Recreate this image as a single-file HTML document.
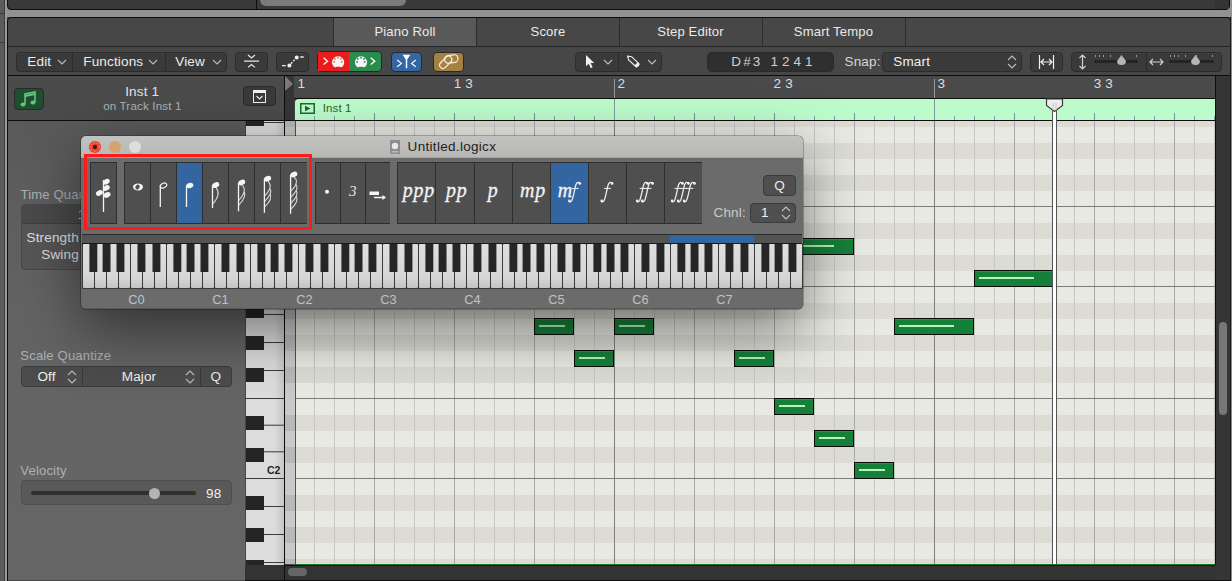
<!DOCTYPE html>
<html><head><meta charset="utf-8"><style>
html,body{margin:0;padding:0;}
body{width:1232px;height:581px;overflow:hidden;position:relative;background:#474747;font-family:"Liberation Sans",sans-serif;}
div{position:absolute;box-sizing:border-box;}
svg{position:absolute;overflow:visible;}
</style></head><body>
<div style="left:0px;top:0px;width:5px;height:581px;background:#5b5b5b"></div>
<div style="left:0px;top:13px;width:5px;height:1px;background:#3a3a3a"></div>
<div style="left:0px;top:42px;width:5px;height:1px;background:#3a3a3a"></div>
<div style="left:4px;top:0px;width:1px;height:581px;background:#3c3c3c"></div>
<div style="left:5px;top:0px;width:2px;height:581px;background:#9a9a9a"></div>
<div style="left:7px;top:0px;width:1225px;height:17px;background:#929292"></div>
<div style="left:7px;top:-6px;width:1223px;height:16px;background:#393939;border:1px solid #0d0d0d;border-radius:0 0 4px 4px"></div>
<div style="left:256px;top:0px;width:1px;height:9px;background:#0d0d0d"></div>
<div style="left:260px;top:-6px;width:146px;height:12px;background:#7b7b7b;border-radius:6px"></div>
<div style="left:1215px;top:0px;width:14px;height:9px;background:#333"></div>
<div style="left:7px;top:17px;width:1224px;height:570px;background:#474747;border:1px solid #0d0d0d;border-radius:4px 4px 0 0"></div>
<div style="left:333px;top:18px;width:143px;height:28px;background:#595959"></div>
<div style="left:333px;top:18px;width:1px;height:28px;background:#2b2b2b"></div>
<div style="left:476px;top:18px;width:1px;height:28px;background:#2b2b2b"></div>
<div style="left:619px;top:18px;width:1px;height:28px;background:#2b2b2b"></div>
<div style="left:762px;top:18px;width:1px;height:28px;background:#2b2b2b"></div>
<div style="left:905px;top:18px;width:1px;height:28px;background:#2b2b2b"></div>
<div style="left:8px;top:46px;width:1222px;height:1px;background:#262626"></div>
<div style="left:335.00px;top:24.91px;width:140px;text-align:center;font:normal normal 13.104px/13.104px 'Liberation Sans', sans-serif;color:#eaeaea;white-space:pre;letter-spacing:0.15px;">Piano Roll</div>
<div style="left:478.00px;top:24.91px;width:140px;text-align:center;font:normal normal 13.104px/13.104px 'Liberation Sans', sans-serif;color:#eaeaea;white-space:pre;letter-spacing:0.15px;">Score</div>
<div style="left:620.50px;top:24.91px;width:140px;text-align:center;font:normal normal 13.104px/13.104px 'Liberation Sans', sans-serif;color:#eaeaea;white-space:pre;letter-spacing:0.15px;">Step Editor</div>
<div style="left:763.50px;top:24.91px;width:140px;text-align:center;font:normal normal 13.104px/13.104px 'Liberation Sans', sans-serif;color:#eaeaea;white-space:pre;letter-spacing:0.15px;">Smart Tempo</div>
<div style="left:8px;top:75px;width:1222px;height:1px;background:#0d0d0d"></div>
<div style="left:16px;top:52px;width:211px;height:20px;background:#3a3a3a;border:1px solid #2c2c2c;border-radius:4px;box-shadow:inset 0 1px 0 rgba(255,255,255,0.03)"></div>
<div style="left:72px;top:53px;width:1px;height:18px;background:#2c2c2c"></div>
<div style="left:165px;top:53px;width:1px;height:18px;background:#2c2c2c"></div>
<div style="left:27.3px;top:54.56px;font:normal normal 13.52px/13.52px 'Liberation Sans', sans-serif;color:#ececec;white-space:pre;letter-spacing:0.15px;">Edit</div>
<svg style="position:absolute;left:56.5px;top:59px;" width="10" height="6" viewBox="0 0 10 6"><path d="M1 1 L5 5 L9 1" fill="none" stroke="#bdbdbd" stroke-width="1.1"/></svg>
<div style="left:83.3px;top:54.56px;font:normal normal 13.52px/13.52px 'Liberation Sans', sans-serif;color:#ececec;white-space:pre;letter-spacing:0.15px;">Functions</div>
<svg style="position:absolute;left:148px;top:59px;" width="10" height="6" viewBox="0 0 10 6"><path d="M1 1 L5 5 L9 1" fill="none" stroke="#bdbdbd" stroke-width="1.1"/></svg>
<div style="left:175.3px;top:54.56px;font:normal normal 13.52px/13.52px 'Liberation Sans', sans-serif;color:#ececec;white-space:pre;letter-spacing:0.15px;">View</div>
<svg style="position:absolute;left:211.5px;top:59px;" width="10" height="6" viewBox="0 0 10 6"><path d="M1 1 L5 5 L9 1" fill="none" stroke="#bdbdbd" stroke-width="1.1"/></svg>
<div style="left:235px;top:52px;width:33px;height:20px;background:#3a3a3a;border:1px solid #2c2c2c;border-radius:4px;box-shadow:inset 0 1px 0 rgba(255,255,255,0.03)"></div>
<svg style="position:absolute;left:235px;top:52px;" width="33" height="20" viewBox="0 0 33 20"><path d="M13 3 L16.5 6 L20 3 M9 9.2 H24 M13 15.4 L16.5 12.5 L20 15.4" fill="none" stroke="#e6e6e6" stroke-width="1.2"/></svg>
<div style="left:276px;top:52px;width:33px;height:20px;background:#3a3a3a;border:1px solid #2c2c2c;border-radius:4px;box-shadow:inset 0 1px 0 rgba(255,255,255,0.03)"></div>
<svg style="position:absolute;left:276px;top:52px;" width="33" height="20" viewBox="0 0 33 20"><path d="M6 13.6 H9.8 M24.3 5 H27.7" fill="none" stroke="#e8e8e8" stroke-width="1.3"/><path d="M15 11.8 L19 7.2" fill="none" stroke="#e8e8e8" stroke-width="1.3" stroke-dasharray="2 1.4"/><circle cx="13.4" cy="13.4" r="2" fill="#f0f0f0"/><circle cx="20.7" cy="5.5" r="2" fill="#f0f0f0"/></svg>
<div style="left:317px;top:51px;width:65px;height:21px;background:#2a8c4c;border:1px solid #262626;border-radius:4px;overflow:hidden"></div>
<div style="left:318px;top:52px;width:31px;height:19px;background:#ec1c1c"></div>
<svg style="position:absolute;left:318px;top:52px;" width="63" height="20" viewBox="0 0 63 20"><path d="M5.5 5.7 L9.6 9.3 L5.5 12.6" fill="none" stroke="#fff" stroke-width="1.3"/><path d="M17.1 15.6 A6.1 6.1 0 1 1 23.1 15.6 L21.900000000000002 14.8 H18.3 Z" fill="#f6f6f6"/><rect x="15.35" y="9.05" width="1.7" height="1.7" fill="#c98a5a"/><rect x="16.15" y="5.95" width="1.7" height="1.7" fill="#c98a5a"/><rect x="19.25" y="4.85" width="1.7" height="1.7" fill="#c98a5a"/><rect x="22.25" y="5.95" width="1.7" height="1.7" fill="#c98a5a"/><rect x="22.85" y="9.05" width="1.7" height="1.7" fill="#c98a5a"/><path d="M40 15.6 A6.1 6.1 0 1 1 46 15.6 L44.8 14.8 H41.2 Z" fill="#f6f6f6"/><rect x="38.25" y="9.05" width="1.7" height="1.7" fill="#3d8a7a"/><rect x="39.05" y="5.95" width="1.7" height="1.7" fill="#3d8a7a"/><rect x="42.15" y="4.85" width="1.7" height="1.7" fill="#3d8a7a"/><rect x="45.15" y="5.95" width="1.7" height="1.7" fill="#3d8a7a"/><rect x="45.75" y="9.05" width="1.7" height="1.7" fill="#3d8a7a"/><path d="M52.7 5.7 L56.8 9.3 L52.7 12.6" fill="none" stroke="#fff" stroke-width="1.3"/></svg>
<div style="left:391px;top:52px;width:31px;height:20px;background:#3367a3;border:1px solid #2a2a2a;border-radius:4px"></div>
<svg style="position:absolute;left:391px;top:52px;" width="31" height="20" viewBox="0 0 31 20"><path d="M6.2 8 L10.4 11.4 L6.2 14.8 M24.8 8 L20.6 11.4 L24.8 14.8" fill="none" stroke="#fff" stroke-width="1.2"/><path d="M11.6 2.8 H19.4 L16.3 7.2 H14.7 Z" fill="#fff"/><path d="M15.5 6 V16.2" stroke="#fff" stroke-width="1.5"/></svg>
<div style="left:433px;top:52px;width:31px;height:20px;background:#a5813f;border:1px solid #2a2a2a;border-radius:4px"></div>
<svg style="position:absolute;left:433px;top:52px;" width="31" height="20" viewBox="0 0 31 20"><g fill="none" stroke="#f6f1e6" stroke-width="1.2"><rect x="11.6" y="3.2" width="13.4" height="7.6" rx="3.8" transform="rotate(-8 18.3 7)"/><rect x="5.5" y="7" width="14.5" height="6.6" rx="3.3" transform="rotate(-45 12.7 10.3)"/></g></svg>
<div style="left:575px;top:52px;width:87px;height:20px;background:#3a3a3a;border:1px solid #2c2c2c;border-radius:4px;box-shadow:inset 0 1px 0 rgba(255,255,255,0.03)"></div>
<div style="left:618px;top:53px;width:1px;height:18px;background:#2c2c2c"></div>
<svg style="position:absolute;left:580px;top:50px;" width="20" height="22" viewBox="0 0 20 22"><path d="M6 5 V16.2 L8.7 13.7 L10.8 18.2 L12.6 17.3 L10.6 13 H14.2 Z" fill="#f2f2f2"/></svg>
<svg style="position:absolute;left:602.5px;top:59px;" width="10" height="6" viewBox="0 0 10 6"><path d="M1 1 L5 5 L9 1" fill="none" stroke="#bdbdbd" stroke-width="1.1"/></svg>
<svg style="position:absolute;left:620px;top:50px;" width="30" height="24" viewBox="0 0 30 24"><g transform="translate(7.4 5.8) rotate(43) scale(0.86)"><path d="M0.3 0 L4.2 -2.5 H15.6 Q17 -2.5 17 -1.1 V1.1 Q17 2.5 15.6 2.5 H4.2 Z" fill="none" stroke="#f2f2f2" stroke-width="1.3" stroke-linejoin="round"/><rect x="13.8" y="-2.5" width="3.2" height="5" rx="1" fill="#f2f2f2"/><path d="M0.3 0 L2.2 -1.2 V1.2 Z" fill="#f2f2f2"/></g></svg>
<svg style="position:absolute;left:646.5px;top:59px;" width="10" height="6" viewBox="0 0 10 6"><path d="M1 1 L5 5 L9 1" fill="none" stroke="#bdbdbd" stroke-width="1.1"/></svg>
<div style="left:707px;top:52px;width:127px;height:20px;background:#2f2f2f;border:1px solid #2a2a2a;border-radius:5px"></div>
<div style="left:731.2px;top:55.06px;font:normal normal 13.52px/13.52px 'Liberation Sans', sans-serif;color:#cfcfcf;white-space:pre;letter-spacing:0.15px;letter-spacing:2.2px">D#3</div>
<div style="left:770.6px;top:55.06px;font:normal normal 13.52px/13.52px 'Liberation Sans', sans-serif;color:#cfcfcf;white-space:pre;letter-spacing:0.15px;letter-spacing:0.1px">1 2 4 1</div>
<div style="left:844.5px;top:54.56px;font:normal normal 13.52px/13.52px 'Liberation Sans', sans-serif;color:#d8d8d8;white-space:pre;letter-spacing:0.15px;">Snap:</div>
<div style="left:882px;top:52px;width:140px;height:20px;background:#3a3a3a;border:1px solid #2c2c2c;border-radius:4px;box-shadow:inset 0 1px 0 rgba(255,255,255,0.03)"></div>
<div style="left:893.3px;top:54.56px;font:normal normal 13.52px/13.52px 'Liberation Sans', sans-serif;color:#f0f0f0;white-space:pre;letter-spacing:0.15px;">Smart</div>
<svg style="position:absolute;left:1006.5px;top:55px;" width="10" height="14" viewBox="0 0 10 14"><path d="M1 5 L5 1 L9 5 M1 9 L5 13 L9 9" fill="none" stroke="#bdbdbd" stroke-width="1.1"/></svg>
<div style="left:1030px;top:52px;width:33px;height:20px;background:#3a3a3a;border:1px solid #2c2c2c;border-radius:4px;box-shadow:inset 0 1px 0 rgba(255,255,255,0.03)"></div>
<svg style="position:absolute;left:1038px;top:54px;" width="17" height="16" viewBox="0 0 17 16"><path d="M1.5 1 V15 M15.5 1 V15 M3 8 H14 M6 5 L3 8 L6 11 M11 5 L14 8 L11 11" fill="none" stroke="#f0f0f0" stroke-width="1.2"/></svg>
<div style="left:1071px;top:52px;width:151px;height:20px;background:#3a3a3a;border:1px solid #2c2c2c;border-radius:4px;box-shadow:inset 0 1px 0 rgba(255,255,255,0.03)"></div>
<div style="left:1146px;top:53px;width:1px;height:18px;background:#2c2c2c"></div>
<svg style="position:absolute;left:1077px;top:53px;" width="11" height="18" viewBox="0 0 11 18"><path d="M5.5 2 V16 M2.5 5 L5.5 2 L8.5 5 M2.5 13 L5.5 16 L8.5 13" fill="none" stroke="#d0d0d0" stroke-width="1.2"/></svg>
<div style="left:1094px;top:60px;width:44px;height:3px;background:#242424;border-radius:2px"></div>
<svg style="position:absolute;left:1116px;top:54px;" width="11" height="12" viewBox="0 0 11 12"><path d="M5.5 1 L10 7 Q10 11 5.5 11 Q1 11 1 7 Z" fill="#b5b5b5"/></svg>
<div style="left:1095px;top:55px;width:1px;height:2px;background:#9a9a9a"></div>
<div style="left:1099px;top:55px;width:1px;height:2px;background:#9a9a9a"></div>
<div style="left:1103px;top:55px;width:1px;height:2px;background:#9a9a9a"></div>
<div style="left:1110px;top:55px;width:1px;height:2px;background:#9a9a9a"></div>
<div style="left:1121px;top:55px;width:1px;height:2px;background:#9a9a9a"></div>
<div style="left:1136px;top:55px;width:1px;height:2px;background:#9a9a9a"></div>
<svg style="position:absolute;left:1149px;top:55px;" width="15" height="14" viewBox="0 0 15 14"><path d="M1 7 H14 M4 4 L1 7 L4 10 M11 4 L14 7 L11 10" fill="none" stroke="#d0d0d0" stroke-width="1.2"/></svg>
<div style="left:1169px;top:60px;width:45px;height:3px;background:#242424;border-radius:2px"></div>
<svg style="position:absolute;left:1190px;top:54px;" width="11" height="12" viewBox="0 0 11 12"><path d="M5.5 1 L10 7 Q10 11 5.5 11 Q1 11 1 7 Z" fill="#b5b5b5"/></svg>
<div style="left:1170px;top:55px;width:1px;height:2px;background:#9a9a9a"></div>
<div style="left:1174px;top:55px;width:1px;height:2px;background:#9a9a9a"></div>
<div style="left:1178px;top:55px;width:1px;height:2px;background:#9a9a9a"></div>
<div style="left:1185px;top:55px;width:1px;height:2px;background:#9a9a9a"></div>
<div style="left:1196px;top:55px;width:1px;height:2px;background:#9a9a9a"></div>
<div style="left:1212px;top:55px;width:1px;height:2px;background:#9a9a9a"></div>
<div style="left:8px;top:76px;width:276px;height:44px;background:#4b4b4b"></div>
<div style="left:8px;top:120px;width:1208px;height:1px;background:#0d0d0d"></div>
<div style="left:14px;top:88px;width:30px;height:22px;background:#1f4f2f;border:1px solid #2a2a2a;border-radius:4px"></div>
<svg style="position:absolute;left:14px;top:88px;" width="30" height="22" viewBox="0 0 30 22"><g fill="none" stroke="#62c47e" stroke-width="1.6"><path d="M11 16 V6 L21 4 V14"/><path d="M11 8 L21 6" stroke-width="2.2"/></g><ellipse cx="9" cy="16.5" rx="2.5" ry="2" fill="#62c47e"/><ellipse cx="19" cy="14.5" rx="2.5" ry="2" fill="#62c47e"/></svg>
<div style="left:82.20px;top:84.86px;width:120px;text-align:center;font:normal normal 13.52px/13.52px 'Liberation Sans', sans-serif;color:#e4e4e4;white-space:pre;letter-spacing:0.15px;">Inst 1</div>
<div style="left:82.40px;top:100.04px;width:120px;text-align:center;font:normal normal 11.648px/11.648px 'Liberation Sans', sans-serif;color:#a9b4b2;white-space:pre;letter-spacing:0.15px;">on Track Inst 1</div>
<div style="left:243px;top:86px;width:33px;height:20px;background:#3a3a3a;border:1px solid #2c2c2c;border-radius:4px"></div>
<div style="left:253px;top:90px;width:13px;height:13px;background:#3a3a3a;border:1.5px solid #f0f0f0;border-top-width:3px"></div>
<svg style="position:absolute;left:255px;top:94px;" width="9" height="7" viewBox="0 0 9 7"><path d="M1.5 2 L4.5 5 L7.5 2" fill="none" stroke="#f0f0f0" stroke-width="1.1"/></svg>
<div style="left:8px;top:121px;width:237px;height:459px;background:linear-gradient(#5a5a5a,#636363 40%,#666 100%)"></div>
<div style="left:20.5px;top:187.91px;font:normal normal 13.104px/13.104px 'Liberation Sans', sans-serif;color:#aab2b2;white-space:pre;letter-spacing:0.15px;">Time Quantize</div>
<div style="left:21px;top:204px;width:211px;height:66px;background:#565656;border:1px solid #474747;border-radius:4px"></div>
<div style="left:22px;top:205px;width:209px;height:19px;background:#4a4a4a;border-bottom:1px solid #3e3e3e;border-radius:3px 3px 0 0"></div>
<div style="left:78px;top:207.56px;font:normal normal 13.52px/13.52px 'Liberation Sans', sans-serif;color:#e6e6e6;white-space:pre;letter-spacing:0.15px;">1/16 Note</div>
<div style="left:-1.20px;top:230.76px;width:80px;text-align:right;font:normal normal 13.52px/13.52px 'Liberation Sans', sans-serif;color:#e0e0e0;white-space:pre;letter-spacing:0.15px;">Strength</div>
<div style="left:-1.20px;top:247.96px;width:80px;text-align:right;font:normal normal 13.52px/13.52px 'Liberation Sans', sans-serif;color:#e0e0e0;white-space:pre;letter-spacing:0.15px;">Swing</div>
<div style="left:20.3px;top:349.21px;font:normal normal 13.104px/13.104px 'Liberation Sans', sans-serif;color:#aab2b2;white-space:pre;letter-spacing:0.15px;">Scale Quantize</div>
<div style="left:21px;top:366px;width:211px;height:21px;background:#4c4c4c;border:1px solid #3c3c3c;border-radius:4px"></div>
<div style="left:82px;top:367px;width:1px;height:19px;background:#3a3a3a"></div>
<div style="left:200px;top:367px;width:1px;height:19px;background:#3a3a3a"></div>
<div style="left:16.50px;top:369.56px;width:60px;text-align:center;font:normal normal 13.52px/13.52px 'Liberation Sans', sans-serif;color:#f0f0f0;white-space:pre;letter-spacing:0.15px;">Off</div>
<svg style="position:absolute;left:66.6px;top:369.5px;" width="10" height="14" viewBox="0 0 10 14"><path d="M1 5 L5 1 L9 5 M1 9 L5 13 L9 9" fill="none" stroke="#bdbdbd" stroke-width="1.1"/></svg>
<div style="left:99.00px;top:369.56px;width:80px;text-align:center;font:normal normal 13.52px/13.52px 'Liberation Sans', sans-serif;color:#f0f0f0;white-space:pre;letter-spacing:0.15px;">Major</div>
<svg style="position:absolute;left:184.7px;top:369.5px;" width="10" height="14" viewBox="0 0 10 14"><path d="M1 5 L5 1 L9 5 M1 9 L5 13 L9 9" fill="none" stroke="#bdbdbd" stroke-width="1.1"/></svg>
<div style="left:200.80px;top:369.56px;width:30px;text-align:center;font:normal normal 13.52px/13.52px 'Liberation Sans', sans-serif;color:#f0f0f0;white-space:pre;letter-spacing:0.15px;">Q</div>
<div style="left:20.3px;top:464.21px;font:normal normal 13.104px/13.104px 'Liberation Sans', sans-serif;color:#aab2b2;white-space:pre;letter-spacing:0.15px;">Velocity</div>
<div style="left:21px;top:480px;width:211px;height:25px;background:#595959;border:1px solid #4e4e4e;border-radius:4px"></div>
<div style="left:31px;top:491px;width:165px;height:4px;background:#303030;border-radius:2px"></div>
<div style="left:148.5px;top:487.5px;width:11px;height:11px;background:#b4b4b4;border-radius:50%"></div>
<div style="left:206px;top:486.86px;font:normal normal 13.52px/13.52px 'Liberation Sans', sans-serif;color:#f2f2f2;white-space:pre;letter-spacing:0.15px;">98</div>
<div style="left:285px;top:76px;width:9px;height:44px;background:#363636"></div>
<svg style="position:absolute;left:285px;top:76px;" width="9" height="16" viewBox="0 0 9 16"><path d="M0 0 L8 8 L0 15 Z" fill="#7a7a7a"/></svg>
<div style="left:284px;top:76px;width:1px;height:505px;background:#0d0d0d"></div>
<div style="left:294px;top:76px;width:921px;height:22px;background:#4a4a4a"></div>
<div style="left:294px;top:98px;width:921px;height:1px;background:#0d0d0d"></div>
<div style="left:614px;top:79px;width:1px;height:19px;background:#9a9a9a"></div>
<div style="left:934px;top:79px;width:1px;height:19px;background:#9a9a9a"></div>
<div style="left:297.5px;top:76.76px;font:normal normal 13.52px/13.52px 'Liberation Sans', sans-serif;color:#dcdcdc;white-space:pre;letter-spacing:0.15px;">1</div>
<div style="left:453.8px;top:76.76px;font:normal normal 13.52px/13.52px 'Liberation Sans', sans-serif;color:#dcdcdc;white-space:pre;letter-spacing:0.15px;">1 3</div>
<div style="left:617.6px;top:76.76px;font:normal normal 13.52px/13.52px 'Liberation Sans', sans-serif;color:#dcdcdc;white-space:pre;letter-spacing:0.15px;">2</div>
<div style="left:773.6px;top:76.76px;font:normal normal 13.52px/13.52px 'Liberation Sans', sans-serif;color:#dcdcdc;white-space:pre;letter-spacing:0.15px;">2 3</div>
<div style="left:937.6px;top:76.76px;font:normal normal 13.52px/13.52px 'Liberation Sans', sans-serif;color:#dcdcdc;white-space:pre;letter-spacing:0.15px;">3</div>
<div style="left:1093.8px;top:76.76px;font:normal normal 13.52px/13.52px 'Liberation Sans', sans-serif;color:#dcdcdc;white-space:pre;letter-spacing:0.15px;">3 3</div>
<div style="left:295px;top:99px;width:920px;height:21px;background:#bdfcca;border-radius:4px 0 0 0"></div>
<svg style="position:absolute;left:300px;top:103px;" width="15" height="11" viewBox="0 0 15 11"><rect x="0.75" y="0.75" width="13.5" height="9.5" fill="none" stroke="#196a33" stroke-width="1.5"/><path d="M5 2.8 L10.5 5.5 L5 8.2 Z" fill="#196a33"/></svg>
<div style="left:322.7px;top:102.52px;font:normal normal 11.440000000000001px/11.440000000000001px 'Liberation Sans', sans-serif;color:#1c6535;white-space:pre;letter-spacing:0.15px;">Inst 1</div>
<svg style="position:absolute;left:294px;top:99px;" width="921" height="21" viewBox="0 0 921 21"><rect x="20" y="17" width="1" height="4" fill="#7fa0a8"/><rect x="40" y="17" width="1" height="4" fill="#7fa0a8"/><rect x="60" y="17" width="1" height="4" fill="#7fa0a8"/><rect x="80" y="14" width="1" height="7" fill="#6f8fa3"/><rect x="100" y="17" width="1" height="4" fill="#7fa0a8"/><rect x="120" y="17" width="1" height="4" fill="#7fa0a8"/><rect x="140" y="17" width="1" height="4" fill="#7fa0a8"/><rect x="160" y="14" width="1" height="7" fill="#6f8fa3"/><rect x="180" y="17" width="1" height="4" fill="#7fa0a8"/><rect x="200" y="17" width="1" height="4" fill="#7fa0a8"/><rect x="220" y="17" width="1" height="4" fill="#7fa0a8"/><rect x="240" y="14" width="1" height="7" fill="#6f8fa3"/><rect x="260" y="17" width="1" height="4" fill="#7fa0a8"/><rect x="280" y="17" width="1" height="4" fill="#7fa0a8"/><rect x="300" y="17" width="1" height="4" fill="#7fa0a8"/><rect x="320" y="0" width="1" height="21" fill="#7c98a8"/><rect x="340" y="17" width="1" height="4" fill="#7fa0a8"/><rect x="360" y="17" width="1" height="4" fill="#7fa0a8"/><rect x="380" y="17" width="1" height="4" fill="#7fa0a8"/><rect x="400" y="14" width="1" height="7" fill="#6f8fa3"/><rect x="420" y="17" width="1" height="4" fill="#7fa0a8"/><rect x="440" y="17" width="1" height="4" fill="#7fa0a8"/><rect x="460" y="17" width="1" height="4" fill="#7fa0a8"/><rect x="480" y="14" width="1" height="7" fill="#6f8fa3"/><rect x="500" y="17" width="1" height="4" fill="#7fa0a8"/><rect x="520" y="17" width="1" height="4" fill="#7fa0a8"/><rect x="540" y="17" width="1" height="4" fill="#7fa0a8"/><rect x="560" y="14" width="1" height="7" fill="#6f8fa3"/><rect x="580" y="17" width="1" height="4" fill="#7fa0a8"/><rect x="600" y="17" width="1" height="4" fill="#7fa0a8"/><rect x="620" y="17" width="1" height="4" fill="#7fa0a8"/><rect x="640" y="0" width="1" height="21" fill="#7c98a8"/><rect x="660" y="17" width="1" height="4" fill="#7fa0a8"/><rect x="680" y="17" width="1" height="4" fill="#7fa0a8"/><rect x="700" y="17" width="1" height="4" fill="#7fa0a8"/><rect x="720" y="14" width="1" height="7" fill="#6f8fa3"/><rect x="740" y="17" width="1" height="4" fill="#7fa0a8"/><rect x="760" y="17" width="1" height="4" fill="#7fa0a8"/><rect x="780" y="17" width="1" height="4" fill="#7fa0a8"/><rect x="800" y="14" width="1" height="7" fill="#6f8fa3"/><rect x="820" y="17" width="1" height="4" fill="#7fa0a8"/><rect x="840" y="17" width="1" height="4" fill="#7fa0a8"/><rect x="860" y="17" width="1" height="4" fill="#7fa0a8"/><rect x="880" y="14" width="1" height="7" fill="#6f8fa3"/><rect x="900" y="17" width="1" height="4" fill="#7fa0a8"/><rect x="920" y="17" width="1" height="4" fill="#7fa0a8"/></svg>
<div style="left:1215px;top:76px;width:1px;height:505px;background:#0d0d0d"></div>
<div style="left:1216px;top:76px;width:14px;height:504px;background:#353535"></div>
<div style="left:1230px;top:17px;width:1px;height:564px;background:#1a1a1a"></div>
<div style="left:1231px;top:17px;width:1px;height:564px;background:#8c8c8c"></div>
<div style="left:1219px;top:322px;width:8px;height:93px;background:#777;border-radius:4px"></div>
<div style="left:245px;top:565px;width:971px;height:15px;background:#333"></div>
<div style="left:245px;top:580px;width:986px;height:1px;background:#0d0d0d"></div>
<div style="left:288px;top:568px;width:19px;height:8px;background:#666;border-radius:4px"></div>
<div style="left:284px;top:565px;width:1px;height:16px;background:#0d0d0d"></div>
<svg style="position:absolute;left:296px;top:121px;overflow:hidden" width="919" height="443" viewBox="0 0 919 443"><rect x="0" y="438" width="919" height="16" fill="#dcdcd5"/><rect x="0" y="422" width="919" height="16" fill="#e9e9e3"/><rect x="0" y="406" width="919" height="16" fill="#dcdcd5"/><rect x="0" y="390" width="919" height="16" fill="#e9e9e3"/><rect x="0" y="374" width="919" height="16" fill="#dcdcd5"/><rect x="0" y="358" width="919" height="16" fill="#e9e9e3"/><rect x="0" y="342" width="919" height="16" fill="#e9e9e3"/><rect x="0" y="326" width="919" height="16" fill="#dcdcd5"/><rect x="0" y="310" width="919" height="16" fill="#e9e9e3"/><rect x="0" y="294" width="919" height="16" fill="#dcdcd5"/><rect x="0" y="278" width="919" height="16" fill="#e9e9e3"/><rect x="0" y="262" width="919" height="16" fill="#e9e9e3"/><rect x="0" y="246" width="919" height="16" fill="#dcdcd5"/><rect x="0" y="230" width="919" height="16" fill="#e9e9e3"/><rect x="0" y="214" width="919" height="16" fill="#dcdcd5"/><rect x="0" y="198" width="919" height="16" fill="#e9e9e3"/><rect x="0" y="182" width="919" height="16" fill="#dcdcd5"/><rect x="0" y="166" width="919" height="16" fill="#e9e9e3"/><rect x="0" y="150" width="919" height="16" fill="#e9e9e3"/><rect x="0" y="134" width="919" height="16" fill="#dcdcd5"/><rect x="0" y="118" width="919" height="16" fill="#e9e9e3"/><rect x="0" y="102" width="919" height="16" fill="#dcdcd5"/><rect x="0" y="86" width="919" height="16" fill="#e9e9e3"/><rect x="0" y="70" width="919" height="16" fill="#e9e9e3"/><rect x="0" y="54" width="919" height="16" fill="#dcdcd5"/><rect x="0" y="38" width="919" height="16" fill="#e9e9e3"/><rect x="0" y="22" width="919" height="16" fill="#dcdcd5"/><rect x="0" y="6" width="919" height="16" fill="#e9e9e3"/><rect x="0" y="-10" width="919" height="16" fill="#dcdcd5"/><rect x="18" y="0" width="1" height="443" fill="#c6c6c2"/><rect x="38" y="0" width="1" height="443" fill="#c6c6c2"/><rect x="58" y="0" width="1" height="443" fill="#c6c6c2"/><rect x="78" y="0" width="1" height="443" fill="#a9a9a6"/><rect x="98" y="0" width="1" height="443" fill="#c6c6c2"/><rect x="118" y="0" width="1" height="443" fill="#c6c6c2"/><rect x="138" y="0" width="1" height="443" fill="#c6c6c2"/><rect x="158" y="0" width="1" height="443" fill="#a9a9a6"/><rect x="178" y="0" width="1" height="443" fill="#c6c6c2"/><rect x="198" y="0" width="1" height="443" fill="#c6c6c2"/><rect x="218" y="0" width="1" height="443" fill="#c6c6c2"/><rect x="238" y="0" width="1" height="443" fill="#a9a9a6"/><rect x="258" y="0" width="1" height="443" fill="#c6c6c2"/><rect x="278" y="0" width="1" height="443" fill="#c6c6c2"/><rect x="298" y="0" width="1" height="443" fill="#c6c6c2"/><rect x="318" y="0" width="1" height="443" fill="#7e7e7c"/><rect x="338" y="0" width="1" height="443" fill="#c6c6c2"/><rect x="358" y="0" width="1" height="443" fill="#c6c6c2"/><rect x="378" y="0" width="1" height="443" fill="#c6c6c2"/><rect x="398" y="0" width="1" height="443" fill="#a9a9a6"/><rect x="418" y="0" width="1" height="443" fill="#c6c6c2"/><rect x="438" y="0" width="1" height="443" fill="#c6c6c2"/><rect x="458" y="0" width="1" height="443" fill="#c6c6c2"/><rect x="478" y="0" width="1" height="443" fill="#a9a9a6"/><rect x="498" y="0" width="1" height="443" fill="#c6c6c2"/><rect x="518" y="0" width="1" height="443" fill="#c6c6c2"/><rect x="538" y="0" width="1" height="443" fill="#c6c6c2"/><rect x="558" y="0" width="1" height="443" fill="#a9a9a6"/><rect x="578" y="0" width="1" height="443" fill="#c6c6c2"/><rect x="598" y="0" width="1" height="443" fill="#c6c6c2"/><rect x="618" y="0" width="1" height="443" fill="#c6c6c2"/><rect x="638" y="0" width="1" height="443" fill="#7e7e7c"/><rect x="658" y="0" width="1" height="443" fill="#c6c6c2"/><rect x="678" y="0" width="1" height="443" fill="#c6c6c2"/><rect x="698" y="0" width="1" height="443" fill="#c6c6c2"/><rect x="718" y="0" width="1" height="443" fill="#a9a9a6"/><rect x="738" y="0" width="1" height="443" fill="#c6c6c2"/><rect x="758" y="0" width="1" height="443" fill="#c6c6c2"/><rect x="778" y="0" width="1" height="443" fill="#c6c6c2"/><rect x="798" y="0" width="1" height="443" fill="#a9a9a6"/><rect x="818" y="0" width="1" height="443" fill="#c6c6c2"/><rect x="838" y="0" width="1" height="443" fill="#c6c6c2"/><rect x="858" y="0" width="1" height="443" fill="#c6c6c2"/><rect x="878" y="0" width="1" height="443" fill="#a9a9a6"/><rect x="898" y="0" width="1" height="443" fill="#c6c6c2"/><rect x="918" y="0" width="1" height="443" fill="#c6c6c2"/><rect x="0" y="357" width="919" height="1" fill="#7c7c78"/><rect x="0" y="277" width="919" height="1" fill="#7c7c78"/><rect x="0" y="165" width="919" height="1" fill="#7c7c78"/><rect x="0" y="85" width="919" height="1" fill="#7c7c78"/></svg>
<svg style="position:absolute;left:285px;top:121px;overflow:hidden" width="10" height="443" viewBox="0 0 10 443"><rect x="0" y="454" width="10" height="16" fill="#c9c9c9"/><rect x="0" y="438" width="10" height="16" fill="#b9b9b9"/><rect x="0" y="422" width="10" height="16" fill="#c9c9c9"/><rect x="0" y="406" width="10" height="16" fill="#b9b9b9"/><rect x="0" y="390" width="10" height="16" fill="#c9c9c9"/><rect x="0" y="374" width="10" height="16" fill="#b9b9b9"/><rect x="0" y="358" width="10" height="16" fill="#c9c9c9"/><rect x="0" y="342" width="10" height="16" fill="#c9c9c9"/><rect x="0" y="326" width="10" height="16" fill="#b9b9b9"/><rect x="0" y="310" width="10" height="16" fill="#c9c9c9"/><rect x="0" y="294" width="10" height="16" fill="#b9b9b9"/><rect x="0" y="278" width="10" height="16" fill="#c9c9c9"/><rect x="0" y="262" width="10" height="16" fill="#c9c9c9"/><rect x="0" y="246" width="10" height="16" fill="#b9b9b9"/><rect x="0" y="230" width="10" height="16" fill="#c9c9c9"/><rect x="0" y="214" width="10" height="16" fill="#b9b9b9"/><rect x="0" y="198" width="10" height="16" fill="#c9c9c9"/><rect x="0" y="182" width="10" height="16" fill="#b9b9b9"/><rect x="0" y="166" width="10" height="16" fill="#c9c9c9"/><rect x="0" y="150" width="10" height="16" fill="#c9c9c9"/><rect x="0" y="134" width="10" height="16" fill="#b9b9b9"/><rect x="0" y="118" width="10" height="16" fill="#c9c9c9"/><rect x="0" y="102" width="10" height="16" fill="#b9b9b9"/><rect x="0" y="86" width="10" height="16" fill="#c9c9c9"/><rect x="0" y="70" width="10" height="16" fill="#c9c9c9"/><rect x="0" y="54" width="10" height="16" fill="#b9b9b9"/><rect x="0" y="38" width="10" height="16" fill="#c9c9c9"/><rect x="0" y="22" width="10" height="16" fill="#b9b9b9"/><rect x="0" y="6" width="10" height="16" fill="#c9c9c9"/><rect x="0" y="-10" width="10" height="16" fill="#b9b9b9"/><rect x="0" y="-26" width="10" height="16" fill="#c9c9c9"/></svg>
<div style="left:295px;top:121px;width:1px;height:444px;background:#0f7a33"></div>
<div style="left:295px;top:564px;width:920px;height:1px;background:#0f7a33"></div>
<div style="left:285px;top:565px;width:930px;height:1px;background:#0d0d0d"></div>
<div style="left:245px;top:121px;width:1px;height:444px;background:#474747"></div>
<svg style="position:absolute;left:246px;top:121px;overflow:hidden" width="38" height="444" viewBox="0 0 38 444"><defs><linearGradient id="kg" x1="0" x2="1"><stop offset="0" stop-color="#dcdcdc"/><stop offset="1" stop-color="#c4c4c4"/></linearGradient></defs><rect x="0" y="0" width="38" height="444" fill="#dcdcdc"/><rect x="28" y="0" width="11" height="444" fill="url(#kg)"/><rect x="18" y="441.0" width="20" height="1" fill="#3a3a3a"/><rect x="18" y="413.0" width="20" height="1" fill="#3a3a3a"/><rect x="18" y="385.0" width="20" height="1" fill="#3a3a3a"/><rect x="0" y="357.0" width="38" height="1" fill="#3a3a3a"/><rect x="18" y="330.3" width="20" height="1" fill="#3a3a3a"/><rect x="18" y="303.7" width="20" height="1" fill="#3a3a3a"/><rect x="0" y="277.0" width="38" height="1" fill="#3a3a3a"/><rect x="18" y="249.0" width="20" height="1" fill="#3a3a3a"/><rect x="18" y="221.0" width="20" height="1" fill="#3a3a3a"/><rect x="18" y="193.0" width="20" height="1" fill="#3a3a3a"/><rect x="0" y="165.0" width="38" height="1" fill="#3a3a3a"/><rect x="18" y="138.3" width="20" height="1" fill="#3a3a3a"/><rect x="18" y="111.7" width="20" height="1" fill="#3a3a3a"/><rect x="0" y="85.0" width="38" height="1" fill="#3a3a3a"/><rect x="18" y="57.0" width="20" height="1" fill="#3a3a3a"/><rect x="18" y="29.0" width="20" height="1" fill="#3a3a3a"/><rect x="18" y="1.0" width="20" height="1" fill="#3a3a3a"/><rect x="0" y="439" width="18" height="14" fill="#252525"/><rect x="0" y="407" width="18" height="14" fill="#252525"/><rect x="0" y="375" width="18" height="14" fill="#252525"/><rect x="0" y="327" width="18" height="14" fill="#252525"/><rect x="0" y="295" width="18" height="14" fill="#252525"/><rect x="0" y="247" width="18" height="14" fill="#252525"/><rect x="0" y="215" width="18" height="14" fill="#252525"/><rect x="0" y="183" width="18" height="14" fill="#252525"/><rect x="0" y="135" width="18" height="14" fill="#252525"/><rect x="0" y="103" width="18" height="14" fill="#252525"/><rect x="0" y="55" width="18" height="14" fill="#252525"/><rect x="0" y="23" width="18" height="14" fill="#252525"/><rect x="0" y="-9" width="18" height="14" fill="#252525"/></svg>
<div style="left:250.50px;top:465.80px;width:30px;text-align:right;font:normal bold 10.4px/10.4px 'Liberation Sans', sans-serif;color:#1e1e1e;white-space:pre;letter-spacing:0.15px;">C2</div>
<div style="left:534px;top:318px;width:40px;height:17px;background:#167f39;border:1px solid #0a0a0a;box-shadow:inset 0 1px 0 #2a9550"></div>
<div style="left:539px;top:325px;width:26px;height:2px;background:#b3f5bb"></div>
<div style="left:574px;top:350px;width:40px;height:17px;background:#167f39;border:1px solid #0a0a0a;box-shadow:inset 0 1px 0 #2a9550"></div>
<div style="left:579px;top:357px;width:26px;height:2px;background:#b3f5bb"></div>
<div style="left:614px;top:318px;width:40px;height:17px;background:#167f39;border:1px solid #0a0a0a;box-shadow:inset 0 1px 0 #2a9550"></div>
<div style="left:619px;top:325px;width:26px;height:2px;background:#b3f5bb"></div>
<div style="left:734px;top:350px;width:40px;height:17px;background:#167f39;border:1px solid #0a0a0a;box-shadow:inset 0 1px 0 #2a9550"></div>
<div style="left:739px;top:357px;width:26px;height:2px;background:#b3f5bb"></div>
<div style="left:774px;top:398px;width:40px;height:17px;background:#167f39;border:1px solid #0a0a0a;box-shadow:inset 0 1px 0 #2a9550"></div>
<div style="left:779px;top:405px;width:26px;height:2px;background:#b3f5bb"></div>
<div style="left:814px;top:430px;width:40px;height:17px;background:#167f39;border:1px solid #0a0a0a;box-shadow:inset 0 1px 0 #2a9550"></div>
<div style="left:819px;top:437px;width:26px;height:2px;background:#b3f5bb"></div>
<div style="left:854px;top:462px;width:40px;height:17px;background:#167f39;border:1px solid #0a0a0a;box-shadow:inset 0 1px 0 #2a9550"></div>
<div style="left:859px;top:469px;width:26px;height:2px;background:#b3f5bb"></div>
<div style="left:894px;top:318px;width:80px;height:17px;background:#167f39;border:1px solid #0a0a0a;box-shadow:inset 0 1px 0 #2a9550"></div>
<div style="left:899px;top:325px;width:55px;height:2px;background:#b3f5bb"></div>
<div style="left:974px;top:270px;width:80px;height:17px;background:#167f39;border:1px solid #0a0a0a;box-shadow:inset 0 1px 0 #2a9550"></div>
<div style="left:979px;top:277px;width:55px;height:2px;background:#b3f5bb"></div>
<div style="left:774px;top:238px;width:80px;height:17px;background:#167f39;border:1px solid #0a0a0a;box-shadow:inset 0 1px 0 #2a9550"></div>
<div style="left:779px;top:245px;width:55px;height:2px;background:#b3f5bb"></div>
<div style="left:1052px;top:111px;width:5px;height:453px;background:#fff;border-left:1px solid #555;border-right:1px solid #555"></div>
<svg style="position:absolute;left:1045px;top:98px;" width="19" height="15" viewBox="0 0 19 15"><path d="M1.5 1 H17.5 V7.5 L9.5 13.5 L1.5 7.5 Z" fill="#ececec" stroke="#3c3c3c" stroke-width="1.2"/><path d="M8 5 V12 M11 5 V12" stroke="#bdbdbd" stroke-width="0.8"/></svg>
<div style="left:81px;top:136px;width:722px;height:173px;background:#6b6b6b;border-radius:5px;box-shadow:0 20px 60px rgba(0,0,0,0.5),0 0 0 0.5px rgba(0,0,0,0.5);overflow:hidden">
<div style="left:0px;top:0px;width:722px;height:22px;background:linear-gradient(#c2c2c0,#b7b7b4)"></div>
<div style="left:0px;top:21px;width:722px;height:1px;background:#a5a5a2"></div>
<svg style="position:absolute;left:7px;top:4px;" width="54" height="14" viewBox="0 0 54 14"><circle cx="7" cy="7" r="6" fill="#f03a2e"/><circle cx="7" cy="7" r="4.2" fill="none" stroke="#f7c040" stroke-width="1" stroke-dasharray="1.5 1.5"/><circle cx="7" cy="7" r="2" fill="#222"/><circle cx="27" cy="7" r="6" fill="#d4a26f"/><circle cx="47" cy="7" r="6" fill="#dedede"/></svg>
<svg style="position:absolute;left:309px;top:4px;" width="10" height="14" viewBox="0 0 10 14"><rect x="0" y="0" width="10" height="14" fill="#8d8d8d"/><circle cx="5" cy="6" r="3.2" fill="#e8e8e8"/><rect x="1.5" y="11" width="7" height="1.5" fill="#bbb"/></svg>
<div style="left:326.6px;top:4.36px;font:normal normal 13.52px/13.52px 'Liberation Sans', sans-serif;color:#1e1e1e;white-space:pre;letter-spacing:0.15px;letter-spacing:0.3px">Untitled.logicx</div>
<div style="left:3px;top:18px;width:228px;height:76px;border:3.5px solid #ff1b1b"></div>
<div style="left:9px;top:26px;width:27px;height:62px;background:#4f4f4f;border:1px solid #2e2e2e"></div>
<svg style="position:absolute;left:9px;top:26px;" width="27" height="62" viewBox="0 0 27 62"><path d="M13.5 18 V50" stroke="#f4f4f4" stroke-width="1.3"/><ellipse cx="16.3" cy="19.7" rx="3.6" ry="2.6" transform="rotate(-28 16.3 19.7)" fill="#f4f4f4"/><ellipse cx="16.3" cy="26" rx="3.6" ry="2.6" transform="rotate(-28 16.3 26)" fill="#f4f4f4"/><ellipse cx="9.4" cy="31" rx="3.6" ry="2.6" transform="rotate(-28 9.4 31)" fill="#f4f4f4"/><ellipse cx="17.1" cy="32.9" rx="3.6" ry="2.6" transform="rotate(-28 17.1 32.9)" fill="#f4f4f4"/></svg>
<div style="left:43px;top:26px;width:183px;height:62px;background:#2e2e2e"></div>
<div style="left:44px;top:27px;width:25px;height:60px;background:#4f4f4f"></div>
<div style="left:70px;top:27px;width:25px;height:60px;background:#4f4f4f"></div>
<div style="left:96px;top:27px;width:25px;height:60px;background:#3366a0"></div>
<div style="left:122px;top:27px;width:25px;height:60px;background:#4f4f4f"></div>
<div style="left:148px;top:27px;width:25px;height:60px;background:#4f4f4f"></div>
<div style="left:174px;top:27px;width:25px;height:60px;background:#4f4f4f"></div>
<div style="left:200px;top:27px;width:26px;height:60px;background:#4f4f4f"></div>
<svg style="position:absolute;left:43px;top:26px;" width="183" height="62" viewBox="0 0 183 62"><ellipse cx="14" cy="25" rx="5" ry="3.4" fill="#f4f4f4"/><ellipse cx="13.5" cy="25" rx="2" ry="2.6" transform="rotate(30 13.5 25)" fill="#4f4f4f"/><path d="M36.3 23 V45" stroke="#f4f4f4" stroke-width="1.3"/><ellipse cx="39.6" cy="23.5" rx="3.3" ry="2.3" transform="rotate(-25 39.6 23.5)" fill="none" stroke="#f4f4f4" stroke-width="1.1"/><path d="M62.5 23.5 V45" stroke="#f4f4f4" stroke-width="1.3"/><ellipse cx="65.8" cy="23.5" rx="3.6" ry="2.6" transform="rotate(-20 65.8 23.5)" fill="#f4f4f4"/></svg>
<svg style="position:absolute;left:43px;top:26px;" width="183" height="62" viewBox="0 0 183 62"><path d="M88.5 23.599999999999994 V46.099999999999994" stroke="#f4f4f4" stroke-width="1.3"/><path d="M92.1 25.699999999999996 C95.1 29.499999999999993, 95.9 33.99999999999999, 88.8 41.99999999999999" fill="none" stroke="#d8d8d8" stroke-width="1.1"/><ellipse cx="91.7" cy="23.099999999999994" rx="3.7" ry="2.6" transform="rotate(-25 91.7 23.099999999999994)" fill="#f4f4f4"/><path d="M114.5 21.0 V49.19999999999999" stroke="#f4f4f4" stroke-width="1.3"/><path d="M118.1 23.1 C121.1 25.9, 121.9 30.4, 114.8 38.4" fill="none" stroke="#d8d8d8" stroke-width="1.1"/><path d="M120.1 29.699999999999996 C121.8 32.199999999999996, 121.7 35.699999999999996, 114.8 43.199999999999996" fill="none" stroke="#d8d8d8" stroke-width="1.1"/><ellipse cx="117.7" cy="20.5" rx="3.7" ry="2.6" transform="rotate(-25 117.7 20.5)" fill="#f4f4f4"/><path d="M140.39999999999998 17.19999999999999 V50.80000000000001" stroke="#f4f4f4" stroke-width="1.3"/><path d="M143.99999999999997 19.29999999999999 C146.99999999999997 21.99999999999999, 147.79999999999998 26.49999999999999, 140.7 33.89999999999999" fill="none" stroke="#d8d8d8" stroke-width="1.1"/><path d="M145.99999999999997 26.49999999999999 C147.7 28.99999999999999, 147.59999999999997 32.499999999999986, 140.7 39.39999999999999" fill="none" stroke="#d8d8d8" stroke-width="1.1"/><path d="M145.99999999999997 31.999999999999986 C147.7 34.499999999999986, 147.59999999999997 37.999999999999986, 140.7 44.89999999999999" fill="none" stroke="#d8d8d8" stroke-width="1.1"/><ellipse cx="143.59999999999997" cy="16.69999999999999" rx="3.7" ry="2.6" transform="rotate(-25 143.59999999999997 16.69999999999999)" fill="#f4f4f4"/><path d="M166.60000000000002 13.0 V51.80000000000001" stroke="#f4f4f4" stroke-width="1.3"/><path d="M170.20000000000002 15.1 C173.20000000000002 17.5, 174.00000000000003 22.0, 166.90000000000003 29.2" fill="none" stroke="#d8d8d8" stroke-width="1.1"/><path d="M172.20000000000002 22.5 C173.90000000000003 25.0, 173.8 28.5, 166.90000000000003 35.2" fill="none" stroke="#d8d8d8" stroke-width="1.1"/><path d="M172.20000000000002 28.5 C173.90000000000003 31.0, 173.8 34.5, 166.90000000000003 41.2" fill="none" stroke="#d8d8d8" stroke-width="1.1"/><path d="M172.20000000000002 34.5 C173.90000000000003 37.0, 173.8 40.5, 166.90000000000003 47.2" fill="none" stroke="#d8d8d8" stroke-width="1.1"/><ellipse cx="169.8" cy="12.5" rx="3.7" ry="2.6" transform="rotate(-25 169.8 12.5)" fill="#f4f4f4"/></svg>
<div style="left:234px;top:26px;width:75px;height:62px;background:#2e2e2e"></div>
<div style="left:235px;top:27px;width:24px;height:60px;background:#4f4f4f"></div>
<div style="left:260px;top:27px;width:24px;height:60px;background:#4f4f4f"></div>
<div style="left:285px;top:27px;width:24px;height:60px;background:#4f4f4f"></div>
<svg style="position:absolute;left:234px;top:26px;" width="75" height="62" viewBox="0 0 75 62"><circle cx="12" cy="29.8" r="2" fill="#f4f4f4"/><path d="M54.5 29.5 H64 V33 H54.5 Z" fill="#f4f4f4"/><path d="M59 35.5 H70" stroke="#f4f4f4" stroke-width="1.3"/><path d="M67.5 33 L71 35.5 L67.5 38 Z" fill="#f4f4f4"/></svg>
<div style="left:261.70px;top:47.94px;width:20px;text-align:center;font:italic normal 15px/15px 'Liberation Serif', serif;color:#e8e8e8;white-space:pre;">3</div>
<div style="left:316px;top:26px;width:305px;height:62px;background:#2e2e2e"></div>
<div style="left:317px;top:27px;width:37px;height:60px;background:#4f4f4f"></div>
<div style="left:355px;top:27px;width:38px;height:60px;background:#4f4f4f"></div>
<div style="left:394px;top:27px;width:37px;height:60px;background:#4f4f4f"></div>
<div style="left:432px;top:27px;width:37px;height:60px;background:#4f4f4f"></div>
<div style="left:470px;top:27px;width:37px;height:60px;background:#3366a0"></div>
<div style="left:508px;top:27px;width:37px;height:60px;background:#4f4f4f"></div>
<div style="left:546px;top:27px;width:37px;height:60px;background:#4f4f4f"></div>
<div style="left:584px;top:27px;width:37px;height:60px;background:#4f4f4f"></div>
<div style="left:321.7px;top:43.75px;font:italic normal 20px/20px 'Liberation Serif', serif;color:#f2f2f2;white-space:pre;letter-spacing:0.8px;-webkit-text-stroke:0.35px #f2f2f2">ppp</div>
<div style="left:365.0px;top:43.75px;font:italic normal 20px/20px 'Liberation Serif', serif;color:#f2f2f2;white-space:pre;letter-spacing:0.8px;-webkit-text-stroke:0.35px #f2f2f2">pp</div>
<div style="left:406.8px;top:43.75px;font:italic normal 20px/20px 'Liberation Serif', serif;color:#f2f2f2;white-space:pre;letter-spacing:0.8px;-webkit-text-stroke:0.35px #f2f2f2">p</div>
<div style="left:439.0px;top:43.75px;font:italic normal 20px/20px 'Liberation Serif', serif;color:#f2f2f2;white-space:pre;letter-spacing:0.8px;-webkit-text-stroke:0.35px #f2f2f2">mp</div>
<div style="left:476.70000000000005px;top:43.75px;font:italic normal 20px/20px 'Liberation Serif', serif;color:#f2f2f2;white-space:pre;letter-spacing:0.8px;-webkit-text-stroke:0.35px #f2f2f2">m</div>
<svg style="position:absolute;left:-81px;top:-136px;overflow:visible" width="1" height="1"><path d="M579.8000000000001 183.6 C578.7 181.6, 576.8000000000001 181.9, 575.8000000000001 185 C574.4000000000001 190, 573.4000000000001 197, 571.8000000000001 200.5 C570.9000000000001 202.3, 569.4000000000001 202.3, 569.0 201" fill="none" stroke="#f2f2f2" stroke-width="1.25"/><circle cx="579.8000000000001" cy="183.4" r="1.35" fill="#f2f2f2"/><circle cx="569.4000000000001" cy="200.9" r="1.3" fill="#f2f2f2"/><path d="M571.8000000000001 188.4 H578.6" stroke="#f2f2f2" stroke-width="1"/><path d="M612.1 183.6 C611.0 181.6, 609.1 181.9, 608.1 185 C606.7 190, 605.7 197, 604.1 200.5 C603.2 202.3, 601.7 202.3, 601.3 201" fill="none" stroke="#f2f2f2" stroke-width="1.25"/><circle cx="612.1" cy="183.4" r="1.35" fill="#f2f2f2"/><circle cx="601.7" cy="200.9" r="1.3" fill="#f2f2f2"/><path d="M604.1 188.4 H610.9" stroke="#f2f2f2" stroke-width="1"/><path d="M647.6 183.6 C646.5 181.6, 644.6 181.9, 643.6 185 C642.2 190, 641.2 197, 639.6 200.5 C638.7 202.3, 637.2 202.3, 636.8 201" fill="none" stroke="#f2f2f2" stroke-width="1.25"/><circle cx="647.6" cy="183.4" r="1.35" fill="#f2f2f2"/><circle cx="637.2" cy="200.9" r="1.3" fill="#f2f2f2"/><path d="M639.6 188.4 H646.4" stroke="#f2f2f2" stroke-width="1"/><path d="M652.6 183.6 C651.5 181.6, 649.6 181.9, 648.6 185 C647.2 190, 646.2 197, 644.6 200.5 C643.7 202.3, 642.2 202.3, 641.8 201" fill="none" stroke="#f2f2f2" stroke-width="1.25"/><circle cx="652.6" cy="183.4" r="1.35" fill="#f2f2f2"/><circle cx="642.2" cy="200.9" r="1.3" fill="#f2f2f2"/><path d="M644.6 188.4 H651.4" stroke="#f2f2f2" stroke-width="1"/><path d="M682.5 183.6 C681.4 181.6, 679.5 181.9, 678.5 185 C677.1 190, 676.1 197, 674.5 200.5 C673.6 202.3, 672.1 202.3, 671.6999999999999 201" fill="none" stroke="#f2f2f2" stroke-width="1.25"/><circle cx="682.5" cy="183.4" r="1.35" fill="#f2f2f2"/><circle cx="672.1" cy="200.9" r="1.3" fill="#f2f2f2"/><path d="M674.5 188.4 H681.3" stroke="#f2f2f2" stroke-width="1"/><path d="M688.5 183.6 C687.4 181.6, 685.5 181.9, 684.5 185 C683.1 190, 682.1 197, 680.5 200.5 C679.6 202.3, 678.1 202.3, 677.6999999999999 201" fill="none" stroke="#f2f2f2" stroke-width="1.25"/><circle cx="688.5" cy="183.4" r="1.35" fill="#f2f2f2"/><circle cx="678.1" cy="200.9" r="1.3" fill="#f2f2f2"/><path d="M680.5 188.4 H687.3" stroke="#f2f2f2" stroke-width="1"/><path d="M694.5 183.6 C693.4 181.6, 691.5 181.9, 690.5 185 C689.1 190, 688.1 197, 686.5 200.5 C685.6 202.3, 684.1 202.3, 683.6999999999999 201" fill="none" stroke="#f2f2f2" stroke-width="1.25"/><circle cx="694.5" cy="183.4" r="1.35" fill="#f2f2f2"/><circle cx="684.1" cy="200.9" r="1.3" fill="#f2f2f2"/><path d="M686.5 188.4 H693.3" stroke="#f2f2f2" stroke-width="1"/></svg>
<div style="left:682px;top:39px;width:33px;height:21px;background:#4f4f4f;border:1px solid #3a3a3a;border-radius:4px"></div>
<div style="left:683.50px;top:43.06px;width:30px;text-align:center;font:normal normal 13.52px/13.52px 'Liberation Sans', sans-serif;color:#f0f0f0;white-space:pre;letter-spacing:0.15px;">Q</div>
<div style="left:632.5px;top:70.06px;font:normal normal 13.52px/13.52px 'Liberation Sans', sans-serif;color:#c8cccc;white-space:pre;letter-spacing:0.15px;">Chnl:</div>
<div style="left:669px;top:67px;width:46px;height:20px;background:#4f4f4f;border:1px solid #3a3a3a;border-radius:4px"></div>
<div style="left:680px;top:69.56px;font:normal normal 13.52px/13.52px 'Liberation Sans', sans-serif;color:#f0f0f0;white-space:pre;letter-spacing:0.15px;">1</div>
<svg style="position:absolute;left:700px;top:69px" width="10" height="16" viewBox="0 0 10 16"><path d="M1 6 L5 2 L9 6 M1 10 L5 14 L9 10" fill="none" stroke="#c0c0c0" stroke-width="1.1"/></svg>
<div style="left:1px;top:98px;width:720px;height:1px;background:#2a2a2a"></div>
<div style="left:1px;top:99px;width:720px;height:8px;background:#535353"></div>
<div style="left:589px;top:99px;width:84px;height:8px;background:#3366a0"></div>
<div style="left:1px;top:107px;width:720px;height:1px;background:#1a1a1a"></div>
<svg style="position:absolute;left:1px;top:108px;" width="721" height="45" viewBox="0 0 721 45"><defs><linearGradient id="wk" x1="0" y1="0" x2="0" y2="1"><stop offset="0" stop-color="#dedede"/><stop offset="0.75" stop-color="#d6d6d8"/><stop offset="1" stop-color="#c4c4c4"/></linearGradient></defs><rect x="0" y="0" width="721" height="45" fill="#3a3a3a"/><rect x="1.0" y="0" width="11" height="44" rx="1" fill="url(#wk)"/><rect x="13.0" y="0" width="11" height="44" rx="1" fill="url(#wk)"/><rect x="25.0" y="0" width="11" height="44" rx="1" fill="url(#wk)"/><rect x="37.0" y="0" width="11" height="44" rx="1" fill="url(#wk)"/><rect x="49.0" y="0" width="11" height="44" rx="1" fill="url(#wk)"/><rect x="61.0" y="0" width="11" height="44" rx="1" fill="url(#wk)"/><rect x="73.0" y="0" width="11" height="44" rx="1" fill="url(#wk)"/><rect x="85.0" y="0" width="11" height="44" rx="1" fill="url(#wk)"/><rect x="97.0" y="0" width="11" height="44" rx="1" fill="url(#wk)"/><rect x="109.0" y="0" width="11" height="44" rx="1" fill="url(#wk)"/><rect x="121.0" y="0" width="11" height="44" rx="1" fill="url(#wk)"/><rect x="133.0" y="0" width="11" height="44" rx="1" fill="url(#wk)"/><rect x="145.0" y="0" width="11" height="44" rx="1" fill="url(#wk)"/><rect x="157.0" y="0" width="11" height="44" rx="1" fill="url(#wk)"/><rect x="169.0" y="0" width="11" height="44" rx="1" fill="url(#wk)"/><rect x="181.0" y="0" width="11" height="44" rx="1" fill="url(#wk)"/><rect x="193.0" y="0" width="11" height="44" rx="1" fill="url(#wk)"/><rect x="205.0" y="0" width="11" height="44" rx="1" fill="url(#wk)"/><rect x="217.0" y="0" width="11" height="44" rx="1" fill="url(#wk)"/><rect x="229.0" y="0" width="11" height="44" rx="1" fill="url(#wk)"/><rect x="241.0" y="0" width="11" height="44" rx="1" fill="url(#wk)"/><rect x="253.0" y="0" width="11" height="44" rx="1" fill="url(#wk)"/><rect x="265.0" y="0" width="11" height="44" rx="1" fill="url(#wk)"/><rect x="277.0" y="0" width="11" height="44" rx="1" fill="url(#wk)"/><rect x="289.0" y="0" width="11" height="44" rx="1" fill="url(#wk)"/><rect x="301.0" y="0" width="11" height="44" rx="1" fill="url(#wk)"/><rect x="313.0" y="0" width="11" height="44" rx="1" fill="url(#wk)"/><rect x="325.0" y="0" width="11" height="44" rx="1" fill="url(#wk)"/><rect x="337.0" y="0" width="11" height="44" rx="1" fill="url(#wk)"/><rect x="349.0" y="0" width="11" height="44" rx="1" fill="url(#wk)"/><rect x="361.0" y="0" width="11" height="44" rx="1" fill="url(#wk)"/><rect x="373.0" y="0" width="11" height="44" rx="1" fill="url(#wk)"/><rect x="385.0" y="0" width="11" height="44" rx="1" fill="url(#wk)"/><rect x="397.0" y="0" width="11" height="44" rx="1" fill="url(#wk)"/><rect x="409.0" y="0" width="11" height="44" rx="1" fill="url(#wk)"/><rect x="421.0" y="0" width="11" height="44" rx="1" fill="url(#wk)"/><rect x="433.0" y="0" width="11" height="44" rx="1" fill="url(#wk)"/><rect x="445.0" y="0" width="11" height="44" rx="1" fill="url(#wk)"/><rect x="457.0" y="0" width="11" height="44" rx="1" fill="url(#wk)"/><rect x="469.0" y="0" width="11" height="44" rx="1" fill="url(#wk)"/><rect x="481.0" y="0" width="11" height="44" rx="1" fill="url(#wk)"/><rect x="493.0" y="0" width="11" height="44" rx="1" fill="url(#wk)"/><rect x="505.0" y="0" width="11" height="44" rx="1" fill="url(#wk)"/><rect x="517.0" y="0" width="11" height="44" rx="1" fill="url(#wk)"/><rect x="529.0" y="0" width="11" height="44" rx="1" fill="url(#wk)"/><rect x="541.0" y="0" width="11" height="44" rx="1" fill="url(#wk)"/><rect x="553.0" y="0" width="11" height="44" rx="1" fill="url(#wk)"/><rect x="565.0" y="0" width="11" height="44" rx="1" fill="url(#wk)"/><rect x="577.0" y="0" width="11" height="44" rx="1" fill="url(#wk)"/><rect x="589.0" y="0" width="11" height="44" rx="1" fill="url(#wk)"/><rect x="601.0" y="0" width="11" height="44" rx="1" fill="url(#wk)"/><rect x="613.0" y="0" width="11" height="44" rx="1" fill="url(#wk)"/><rect x="625.0" y="0" width="11" height="44" rx="1" fill="url(#wk)"/><rect x="637.0" y="0" width="11" height="44" rx="1" fill="url(#wk)"/><rect x="649.0" y="0" width="11" height="44" rx="1" fill="url(#wk)"/><rect x="661.0" y="0" width="11" height="44" rx="1" fill="url(#wk)"/><rect x="673.0" y="0" width="11" height="44" rx="1" fill="url(#wk)"/><rect x="685.0" y="0" width="11" height="44" rx="1" fill="url(#wk)"/><rect x="697.0" y="0" width="11" height="44" rx="1" fill="url(#wk)"/><rect x="709.0" y="0" width="11" height="44" rx="1" fill="url(#wk)"/><rect x="7.4" y="0" width="7.9" height="28" fill="#262626"/><rect x="20.6" y="0" width="7.9" height="28" fill="#262626"/><rect x="34.5" y="0" width="7.9" height="28" fill="#262626"/><rect x="55.5" y="0" width="7.9" height="28" fill="#262626"/><rect x="70.5" y="0" width="7.9" height="28" fill="#262626"/><rect x="91.4" y="0" width="7.9" height="28" fill="#262626"/><rect x="104.6" y="0" width="7.9" height="28" fill="#262626"/><rect x="118.5" y="0" width="7.9" height="28" fill="#262626"/><rect x="139.5" y="0" width="7.9" height="28" fill="#262626"/><rect x="154.5" y="0" width="7.9" height="28" fill="#262626"/><rect x="175.4" y="0" width="7.9" height="28" fill="#262626"/><rect x="188.6" y="0" width="7.9" height="28" fill="#262626"/><rect x="202.5" y="0" width="7.9" height="28" fill="#262626"/><rect x="223.5" y="0" width="7.9" height="28" fill="#262626"/><rect x="238.5" y="0" width="7.9" height="28" fill="#262626"/><rect x="259.4" y="0" width="7.9" height="28" fill="#262626"/><rect x="272.6" y="0" width="7.9" height="28" fill="#262626"/><rect x="286.5" y="0" width="7.9" height="28" fill="#262626"/><rect x="307.5" y="0" width="7.9" height="28" fill="#262626"/><rect x="322.5" y="0" width="7.9" height="28" fill="#262626"/><rect x="343.4" y="0" width="7.9" height="28" fill="#262626"/><rect x="356.6" y="0" width="7.9" height="28" fill="#262626"/><rect x="370.5" y="0" width="7.9" height="28" fill="#262626"/><rect x="391.5" y="0" width="7.9" height="28" fill="#262626"/><rect x="406.5" y="0" width="7.9" height="28" fill="#262626"/><rect x="427.4" y="0" width="7.9" height="28" fill="#262626"/><rect x="440.6" y="0" width="7.9" height="28" fill="#262626"/><rect x="454.5" y="0" width="7.9" height="28" fill="#262626"/><rect x="475.5" y="0" width="7.9" height="28" fill="#262626"/><rect x="490.5" y="0" width="7.9" height="28" fill="#262626"/><rect x="511.4" y="0" width="7.9" height="28" fill="#262626"/><rect x="524.6" y="0" width="7.9" height="28" fill="#262626"/><rect x="538.5" y="0" width="7.9" height="28" fill="#262626"/><rect x="559.5" y="0" width="7.9" height="28" fill="#262626"/><rect x="574.5" y="0" width="7.9" height="28" fill="#262626"/><rect x="595.4" y="0" width="7.9" height="28" fill="#262626"/><rect x="608.6" y="0" width="7.9" height="28" fill="#262626"/><rect x="622.5" y="0" width="7.9" height="28" fill="#262626"/><rect x="643.5" y="0" width="7.9" height="28" fill="#262626"/><rect x="658.5" y="0" width="7.9" height="28" fill="#262626"/><rect x="679.4" y="0" width="7.9" height="28" fill="#262626"/><rect x="692.6" y="0" width="7.9" height="28" fill="#262626"/><rect x="706.5" y="0" width="7.9" height="28" fill="#262626"/></svg>
<div style="left:0px;top:172px;width:722px;height:1px;background:#5a5a5a"></div>
<div style="left:40.50px;top:157.67px;width:30px;text-align:center;font:normal normal 12.792000000000002px/12.792000000000002px 'Liberation Sans', sans-serif;color:#bfc3c3;white-space:pre;letter-spacing:0.15px;">C0</div>
<div style="left:124.50px;top:157.67px;width:30px;text-align:center;font:normal normal 12.792000000000002px/12.792000000000002px 'Liberation Sans', sans-serif;color:#bfc3c3;white-space:pre;letter-spacing:0.15px;">C1</div>
<div style="left:208.50px;top:157.67px;width:30px;text-align:center;font:normal normal 12.792000000000002px/12.792000000000002px 'Liberation Sans', sans-serif;color:#bfc3c3;white-space:pre;letter-spacing:0.15px;">C2</div>
<div style="left:292.50px;top:157.67px;width:30px;text-align:center;font:normal normal 12.792000000000002px/12.792000000000002px 'Liberation Sans', sans-serif;color:#bfc3c3;white-space:pre;letter-spacing:0.15px;">C3</div>
<div style="left:376.50px;top:157.67px;width:30px;text-align:center;font:normal normal 12.792000000000002px/12.792000000000002px 'Liberation Sans', sans-serif;color:#bfc3c3;white-space:pre;letter-spacing:0.15px;">C4</div>
<div style="left:460.50px;top:157.67px;width:30px;text-align:center;font:normal normal 12.792000000000002px/12.792000000000002px 'Liberation Sans', sans-serif;color:#bfc3c3;white-space:pre;letter-spacing:0.15px;">C5</div>
<div style="left:544.50px;top:157.67px;width:30px;text-align:center;font:normal normal 12.792000000000002px/12.792000000000002px 'Liberation Sans', sans-serif;color:#bfc3c3;white-space:pre;letter-spacing:0.15px;">C6</div>
<div style="left:628.50px;top:157.67px;width:30px;text-align:center;font:normal normal 12.792000000000002px/12.792000000000002px 'Liberation Sans', sans-serif;color:#bfc3c3;white-space:pre;letter-spacing:0.15px;">C7</div>
</div>
</body></html>
